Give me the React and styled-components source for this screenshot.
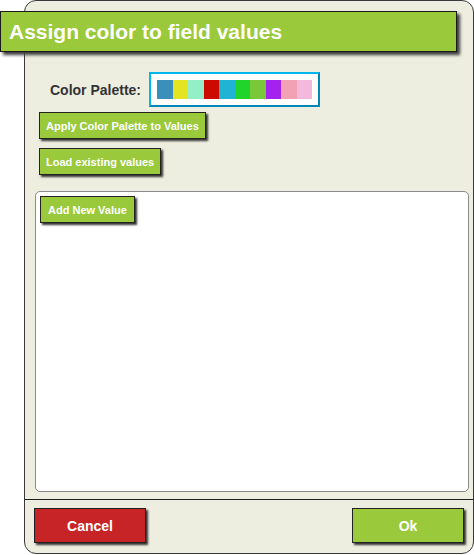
import React from "react";
import styled, { createGlobalStyle } from "styled-components";

const Global = createGlobalStyle`
  html, body { margin: 0; padding: 0; background: #ffffff; }
  body { font-family: "Liberation Sans", Arial, sans-serif; }
  * { box-sizing: border-box; }
`;

const Dialog = styled.div`
  margin-left: 24px;
  width: 450px;
  height: 554px;
  border: 1px solid #3a3a3a;
  border-radius: 12px;
  background: #eeeee0;
  display: flex;
  flex-direction: column;
`;

const TitleBar = styled.h1`
  margin: 10px 0 0 -25px;
  width: 457px;
  height: 41px;
  flex: none;
  border: 1px solid #1a1a1a;
  background: #9ac93b;
  box-shadow: 3px 3px 3px #3a3a3a;
  color: #ffffff;
  font-size: 21px;
  font-weight: bold;
  line-height: 39px;
  padding: 0 0 0 8px;
`;

const PaletteRow = styled.div`
  margin: 20px 0 0 25px;
  display: flex;
  align-items: center;
  gap: 8px;
  flex: none;
`;

const Label = styled.span`
  color: #333333;
  font-size: 14px;
  font-weight: bold;
`;

const PaletteBox = styled.div`
  display: flex;
  width: 171px;
  height: 35px;
  padding: 6px;
  background: #ffffff;
  border: 2px solid;
  border-color: #00b6ec #0088b8 #0088b8 #00b6ec;
`;

const Swatch = styled.span`
  flex: 1;
  background: ${(p) => p.$color};
`;

const Button = styled.button`
  flex: none;
  align-self: flex-start;
  height: ${(p) => p.$h || 27}px;
  width: ${(p) => (p.$w ? p.$w + "px" : "auto")};
  margin: ${(p) => p.$margin || 0};
  padding: 0 ${(p) => p.$pad ?? 6}px;
  border: 1px solid #222222;
  background: ${(p) => (p.$red ? "#c62426" : "#9ac93b")};
  box-shadow: 2px 2px 2px #333333;
  color: #ffffff;
  font-family: "Liberation Sans", Arial, sans-serif;
  font-size: ${(p) => p.$size || 11}px;
  font-weight: bold;
  cursor: pointer;
  white-space: nowrap;
`;

const ValuesBox = styled.div`
  flex: 1;
  margin: 16px 4px 0 10px;
  background: #ffffff;
  border: 1px solid #8a8a8a;
  border-radius: 5px;
  padding: 4px;
  display: flex;
  flex-direction: column;
`;

const Separator = styled.hr`
  flex: none;
  margin: 7px 0 0 0;
  border: none;
  border-top: 1px solid #1e1e1e;
  height: 0;
`;

const Footer = styled.div`
  flex: none;
  display: flex;
  justify-content: space-between;
  padding: 8px 9px 10px 9px;
`;

const colors = [
  "#3a8fbb",
  "#e4e423",
  "#93efc8",
  "#cc0a00",
  "#20b4d4",
  "#20d42c",
  "#78c83a",
  "#a422ee",
  "#f2a1b4",
  "#f4b8dc",
];

export default function App() {
  return (
    <>
      <Global />
      <Dialog>
        <TitleBar>Assign color to field values</TitleBar>
        <PaletteRow>
          <Label>Color Palette:</Label>
          <PaletteBox>
            {colors.map((c) => (
              <Swatch key={c} $color={c} />
            ))}
          </PaletteBox>
        </PaletteRow>
        <Button $margin="5px 0 0 14px">Apply Color Palette to Values</Button>
        <Button $margin="9px 0 0 14px">Load existing values</Button>
        <ValuesBox>
          <Button $pad={7}>Add New Value</Button>
        </ValuesBox>
        <Separator />
        <Footer>
          <Button $red $w={112} $h={35} $size={14}>
            Cancel
          </Button>
          <Button $w={112} $h={35} $size={14}>
            Ok
          </Button>
        </Footer>
      </Dialog>
    </>
  );
}
